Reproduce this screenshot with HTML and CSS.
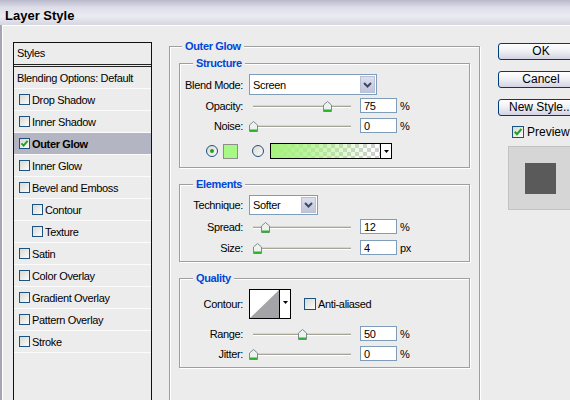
FILE: index.html
```html
<!DOCTYPE html>
<html lang="en">
<head>
  <meta charset="UTF-8">
  <meta name="viewport" content="width=device-width, initial-scale=1.0">
  <title>Layer Style</title>
  <link rel="stylesheet" href="styles.css">
</head>
<body>
  <div class="titlebar">Layer Style</div>

  <div class="dialog">

    <!-- list of effects on the left -->
    <div class="styles-list">
      <div class="list-head">Styles</div>
      <div class="list-row plain">Blending Options: Default</div>
      <div class="list-row"><span class="check"></span>Drop Shadow</div>
      <div class="list-row"><span class="check"></span>Inner Shadow</div>
      <div class="list-row selected">
        <span class="check"><svg width="9" height="9" viewBox="0 0 9 9"><path d="M1.5 4.3 L3.6 6.6 L7.6 1.8" fill="none" stroke="#21a121" stroke-width="1.9"/></svg></span>Outer Glow
      </div>
      <div class="list-row"><span class="check"></span>Inner Glow</div>
      <div class="list-row"><span class="check"></span>Bevel and Emboss</div>
      <div class="list-row sub"><span class="check"></span>Contour</div>
      <div class="list-row sub"><span class="check"></span>Texture</div>
      <div class="list-row"><span class="check"></span>Satin</div>
      <div class="list-row"><span class="check"></span>Color Overlay</div>
      <div class="list-row"><span class="check"></span>Gradient Overlay</div>
      <div class="list-row"><span class="check"></span>Pattern Overlay</div>
      <div class="list-row"><span class="check"></span>Stroke</div>
    </div>

    <!-- settings of the selected effect -->
    <div class="group outer">
      <div class="group-title">Outer Glow</div>

      <div class="group structure">
        <div class="group-title">Structure</div>
        <div class="row">
          <span class="label">Blend Mode:</span>
          <div class="select blend">
            <span class="select-text">Screen</span>
            <span class="drop-btn"><svg width="9" height="6" viewBox="0 0 9 6"><path d="M1 1 L4.5 4.5 L8 1" fill="none" stroke="#3d4a66" stroke-width="2"/></svg></span>
          </div>
        </div>
        <div class="row r-opacity">
          <span class="label">Opacity:</span>
          <div class="slider"><span class="track"></span><span class="thumb" style="left: 75%"><svg width="9" height="11" viewBox="0 0 9 11"><path d="M0.5 4 L4.5 0.5 L8.5 4 V10.5 H0.5 Z" fill="#eef1ee" stroke="#7b8b92"/><rect x="1" y="8.5" width="7" height="2" fill="#28b428"/></svg></span></div>
          <span class="field">75</span><span class="unit">%</span>
        </div>
        <div class="row r-noise">
          <span class="label">Noise:</span>
          <div class="slider"><span class="track"></span><span class="thumb" style="left: 0%"><svg width="9" height="11" viewBox="0 0 9 11"><path d="M0.5 4 L4.5 0.5 L8.5 4 V10.5 H0.5 Z" fill="#eef1ee" stroke="#7b8b92"/><rect x="1" y="8.5" width="7" height="2" fill="#28b428"/></svg></span></div>
          <span class="field">0</span><span class="unit">%</span>
        </div>
        <div class="row r-color">
          <span class="radio on"></span>
          <span class="swatch"></span>
          <span class="radio second"></span>
          <div class="gradient">
            <span class="gradient-fill"></span>
            <span class="gradient-arrow"><svg width="5" height="3" viewBox="0 0 5 3"><path d="M0 0 H5 L2.5 3 Z" fill="#000"/></svg></span>
          </div>
        </div>
      </div>

      <div class="group elements">
        <div class="group-title">Elements</div>
        <div class="row">
          <span class="label">Technique:</span>
          <div class="select technique">
            <span class="select-text">Softer</span>
            <span class="drop-btn"><svg width="9" height="6" viewBox="0 0 9 6"><path d="M1 1 L4.5 4.5 L8 1" fill="none" stroke="#3d4a66" stroke-width="2"/></svg></span>
          </div>
        </div>
        <div class="row r-spread">
          <span class="label">Spread:</span>
          <div class="slider"><span class="track"></span><span class="thumb" style="left: 12%"><svg width="9" height="11" viewBox="0 0 9 11"><path d="M0.5 4 L4.5 0.5 L8.5 4 V10.5 H0.5 Z" fill="#eef1ee" stroke="#7b8b92"/><rect x="1" y="8.5" width="7" height="2" fill="#28b428"/></svg></span></div>
          <span class="field">12</span><span class="unit">%</span>
        </div>
        <div class="row r-size">
          <span class="label">Size:</span>
          <div class="slider"><span class="track"></span><span class="thumb" style="left: 4%"><svg width="9" height="11" viewBox="0 0 9 11"><path d="M0.5 4 L4.5 0.5 L8.5 4 V10.5 H0.5 Z" fill="#eef1ee" stroke="#7b8b92"/><rect x="1" y="8.5" width="7" height="2" fill="#28b428"/></svg></span></div>
          <span class="field">4</span><span class="unit">px</span>
        </div>
      </div>

      <div class="group quality">
        <div class="group-title">Quality</div>
        <div class="row">
          <span class="label">Contour:</span>
          <div class="contour">
            <span class="contour-curve"><svg width="29" height="28" viewBox="0 0 29 28"><path d="M0 28 L29 0 V28 Z" fill="#a4a4a8"/></svg></span>
            <span class="contour-arrow"><svg width="5" height="3" viewBox="0 0 5 3"><path d="M0 0 H5 L2.5 3 Z" fill="#000"/></svg></span>
          </div>
          <span class="check big aa"></span><span>Anti-aliased</span>
        </div>
        <div class="row r-range">
          <span class="label">Range:</span>
          <div class="slider"><span class="track"></span><span class="thumb" style="left: 50%"><svg width="9" height="11" viewBox="0 0 9 11"><path d="M0.5 4 L4.5 0.5 L8.5 4 V10.5 H0.5 Z" fill="#eef1ee" stroke="#7b8b92"/><rect x="1" y="8.5" width="7" height="2" fill="#28b428"/></svg></span></div>
          <span class="field">50</span><span class="unit">%</span>
        </div>
        <div class="row r-jitter">
          <span class="label">Jitter:</span>
          <div class="slider"><span class="track"></span><span class="thumb" style="left: 0%"><svg width="9" height="11" viewBox="0 0 9 11"><path d="M0.5 4 L4.5 0.5 L8.5 4 V10.5 H0.5 Z" fill="#eef1ee" stroke="#7b8b92"/><rect x="1" y="8.5" width="7" height="2" fill="#28b428"/></svg></span></div>
          <span class="field">0</span><span class="unit">%</span>
        </div>
      </div>
    </div>

    <!-- buttons and preview on the right -->
    <div class="buttons">
      <div class="btn">OK</div>
      <div class="btn">Cancel</div>
      <div class="btn">New Style...</div>
      <div class="preview-check">
        <span class="check big"><svg width="10" height="10" viewBox="0 0 10 10"><path d="M1.8 4.8 L4 7.2 L8.4 2" fill="none" stroke="#21a121" stroke-width="2"/></svg></span>Preview
      </div>
      <div class="preview"><span class="preview-swatch"></span></div>
    </div>

  </div>
</body>
</html>
```

FILE: styles.css
```css
html, body {
  margin: 0;
  padding: 0;
}

body {
  width: 570px;
  height: 400px;
  overflow: hidden;
  background-color: #ececec;
  font-family: 'Liberation Sans', Arial, sans-serif;
  font-size: 11px;
  letter-spacing: -0.35px;
  color: #000;
}

.titlebar {
  height: 25px;
  padding-left: 5px;
  line-height: 31px;
  font-size: 13px;
  font-weight: bold;
  letter-spacing: 0;
  background: linear-gradient(#b8b8cb, #dedee9 30%, #ebebf2 65%, #d6d6e2);
}

.dialog {
  display: flex;
  align-items: flex-start;
  height: 375px;
  box-sizing: border-box;
  padding: 17px 0 0 11px;
  border-left: 2px solid #a4a4b2;
  box-shadow: inset 1px 1px 0 #fff;
  overflow: hidden;
}

/* ---- effects list ---- */

.styles-list {
  flex: none;
  width: 139px;
  height: 370px;
  box-sizing: border-box;
  margin-right: 17px;
  border: 1px solid #111;
  border-bottom: none;
}

.list-head {
  height: 21px;
  line-height: 21px;
  padding-left: 3px;
  border-bottom: 3px double #222;
}

.list-row {
  display: flex;
  align-items: center;
  height: 21px;
  padding-left: 5px;
  border-bottom: 1px solid #fbfbfb;
}

.list-row.plain {
  padding-left: 3px;
}

.list-row.sub {
  padding-left: 18px;
}

.list-row.selected {
  background-color: #b3b5c2;
  font-weight: bold;
}

.check {
  flex: none;
  display: flex;
  align-items: center;
  justify-content: center;
  width: 11px;
  height: 11px;
  box-sizing: border-box;
  margin-right: 2px;
  border: 1px solid #1c5180;
  background: linear-gradient(135deg, #d9d9d2, #fbfbfa);
}

.check.big {
  width: 12px;
  height: 12px;
  margin-right: 3px;
}

/* ---- groups ---- */

.group {
  position: relative;
  box-sizing: border-box;
  border: 1px solid #9f9f9f;
  box-shadow: inset 1px 1px 0 #fff, 1px 1px 0 #fff;
}

.group-title {
  position: absolute;
  top: -7px;
  left: 13px;
  padding: 0 3px;
  line-height: 13px;
  background-color: #ececec;
  color: #0046d5;
  font-weight: bold;
}

.outer {
  flex: none;
  width: 311px;
  margin-top: 4px;
  padding: 16px 9px 40px;
}

.outer > .group-title {
  left: 12px;
}

.structure {
  padding: 10px 0 8px;
}

.elements {
  margin-top: 16px;
  padding: 10px 0 6px;
}

.quality {
  margin-top: 16px;
  padding: 10px 0 6px;
}

.row {
  display: flex;
  align-items: center;
}

.label {
  flex: none;
  width: 63px;
  margin-right: 6px;
  text-align: right;
}

.r-opacity { margin-top: 3px; }
.r-noise { margin-top: 5px; }
.r-color { margin-top: 10px; height: 16px; }
.r-spread { margin-top: 4px; }
.r-size { margin-top: 6px; }
.r-range { margin-top: 7px; }
.r-jitter { margin-top: 5px; }

/* ---- controls ---- */

.select {
  display: flex;
  box-sizing: border-box;
  border: 1px solid #7f9db9;
  background-color: #fff;
}

.select.blend {
  width: 128px;
  height: 21px;
}

.select.technique {
  width: 69px;
  height: 20px;
}

.select-text {
  flex: 1;
  padding-left: 3px;
  align-self: center;
}

.drop-btn {
  display: flex;
  align-items: center;
  justify-content: center;
  width: 15px;
  margin: 1px;
  box-sizing: border-box;
  border: 1px solid #b8bfd6;
  background: linear-gradient(#dcdfee, #c0c4d8);
}

.slider {
  position: relative;
  flex: none;
  width: 98px;
  height: 15px;
  margin: 0 9px 0 4px;
}

.track {
  position: absolute;
  left: 0;
  right: 0;
  top: 7px;
  height: 1px;
  background-color: #a7a598;
  border-top: 1px solid #d8d6cc;
  border-bottom: 1px solid #fff;
}

.thumb {
  position: absolute;
  top: 3px;
  margin-left: -4px;
  line-height: 0;
}

.field {
  flex: none;
  width: 37px;
  height: 15px;
  box-sizing: border-box;
  padding-left: 3px;
  line-height: 14px;
  border: 1px solid #7f9db9;
  background-color: #fff;
}

.unit {
  margin-left: 3px;
}

.radio {
  flex: none;
  display: flex;
  align-items: center;
  justify-content: center;
  width: 12px;
  height: 12px;
  box-sizing: border-box;
  margin-left: 26px;
  border: 1px solid #1c5180;
  border-radius: 50%;
  background: linear-gradient(135deg, #d9d9d2, #fbfbfa);
}

.radio.on::after {
  content: '';
  width: 4px;
  height: 4px;
  border-radius: 50%;
  background-color: #21a121;
}

.radio.second {
  margin-left: 14px;
}

.swatch {
  flex: none;
  width: 15px;
  height: 15px;
  box-sizing: border-box;
  margin-left: 5px;
  border: 1px solid #8e8e8e;
  background-color: #a9f886;
}

.gradient {
  display: flex;
  width: 122px;
  height: 16px;
  box-sizing: border-box;
  margin-left: 6px;
  border: 1px solid #000;
}

.gradient-fill {
  flex: 1;
  background:
    linear-gradient(to right, #a6f27e 0%, rgba(166, 242, 126, 0.75) 35%, rgba(166, 242, 126, 0) 95%),
    conic-gradient(#d0d0d0 25%, #fff 0 50%, #d0d0d0 0 75%, #fff 0) 0 0 / 8px 8px;
}

.gradient-arrow,
.contour-arrow {
  display: flex;
  align-items: center;
  justify-content: center;
  border-left: 1px solid #000;
  background-color: #fff;
}

.gradient-arrow {
  width: 10px;
}

.contour {
  display: flex;
  width: 42px;
  height: 30px;
  box-sizing: border-box;
  border: 1px solid #000;
  background-color: #fff;
}

.contour-curve {
  width: 29px;
  line-height: 0;
}

.contour-arrow {
  flex: 1;
  padding-bottom: 3px;
}

.check.aa {
  margin-left: 13px;
  margin-right: 2px;
}

/* ---- right column ---- */

.buttons {
  flex: none;
  width: 86px;
  margin: 1px 0 0 18px;
  font-size: 12px;
  letter-spacing: 0;
}

.btn {
  height: 17px;
  box-sizing: border-box;
  line-height: 15px;
  text-align: center;
  border: 1px solid #003c74;
  border-radius: 3px;
  background: linear-gradient(#ffffff, #f1f1f5 45%, #d3d3e3);
  margin-bottom: 11px;
}

.btn + .btn + .btn {
  margin-bottom: 10px;
}

.preview-check {
  display: flex;
  align-items: center;
  height: 12px;
  margin-left: 14px;
}

.preview {
  display: flex;
  align-items: center;
  justify-content: center;
  width: 64px;
  height: 64px;
  box-sizing: border-box;
  margin: 8px 0 0 10px;
  border: 1px solid #c2c2c2;
  background-color: #d6d6d6;
}

.preview-swatch {
  width: 31px;
  height: 31px;
  background-color: #5a5a5a;
}
```
